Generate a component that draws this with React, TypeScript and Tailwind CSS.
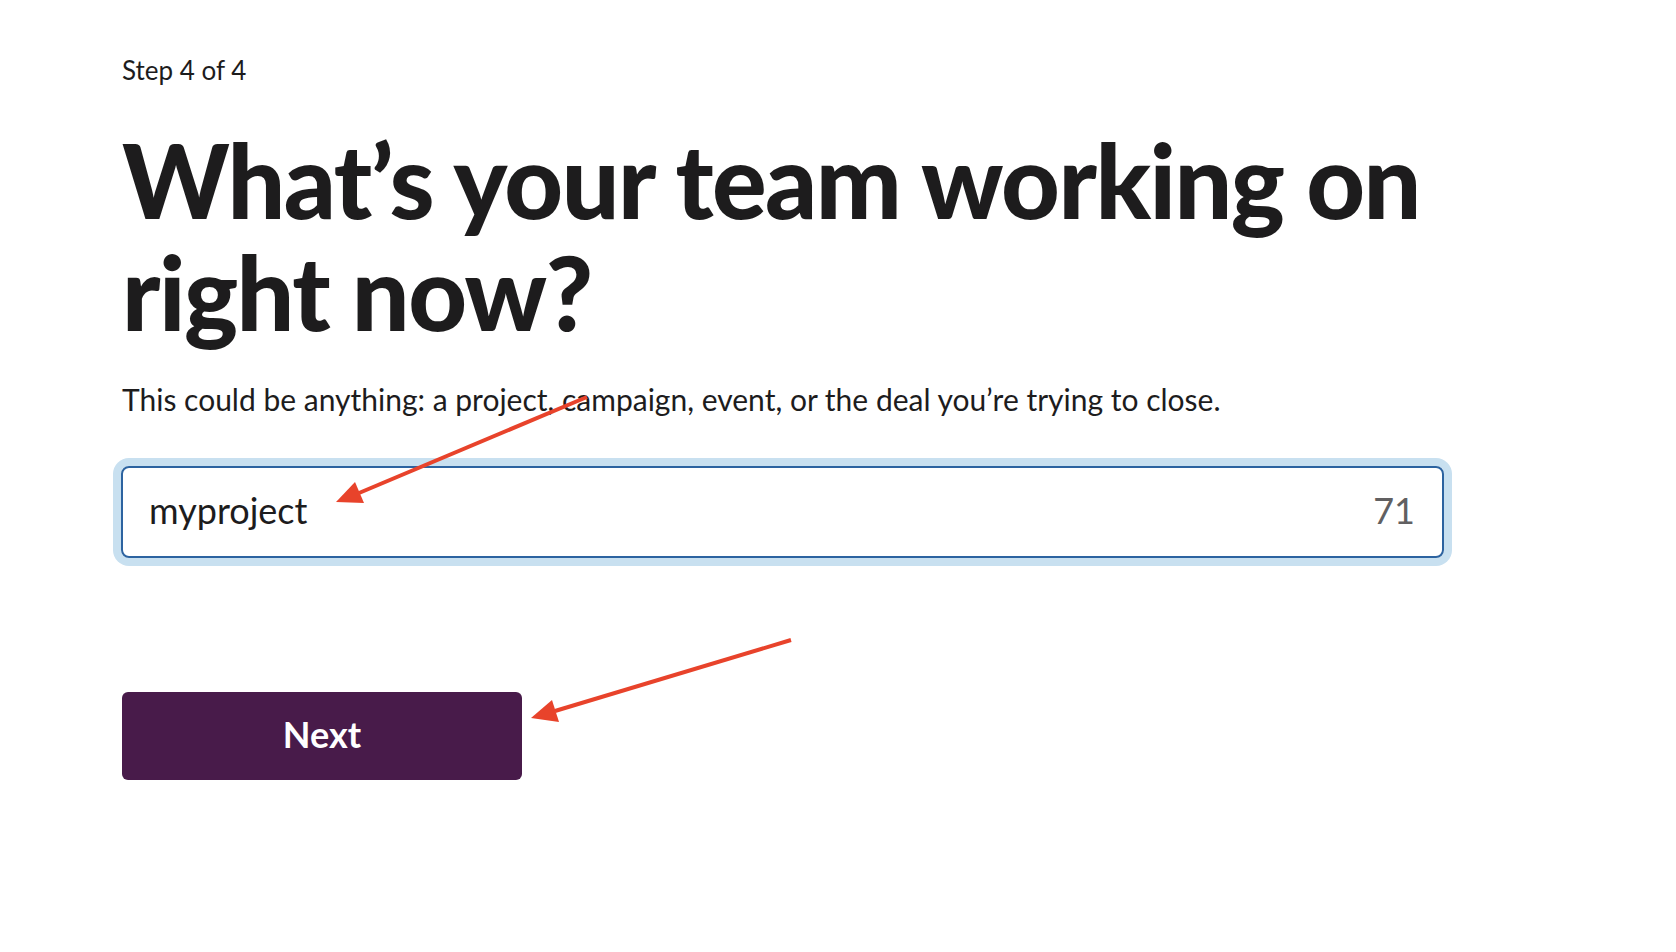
import React from "react";

const Arrow = ({
  from,
  tip,
  left,
  right,
  base,
}: {
  from: [number, number];
  tip: [number, number];
  left: [number, number];
  right: [number, number];
  base: [number, number];
}) => (
  <g>
    <line
      x1={from[0]}
      y1={from[1]}
      x2={base[0]}
      y2={base[1]}
      stroke="#e8432b"
      strokeWidth={4}
      strokeLinecap="butt"
    />
    <polygon
      points={`${tip[0]},${tip[1]} ${left[0]},${left[1]} ${right[0]},${right[1]}`}
      fill="#e8432b"
    />
  </g>
);

const App = () => {
  return (
    <div className="relative w-[1676px] h-[952px] bg-white overflow-hidden font-['Lato','Liberation_Sans',sans-serif] text-[#1d1c1d]">
      <main className="flex flex-col items-start pl-[122px] pt-[54px]">
        <p className="text-[26px] leading-[32px]">Step 4 of 4</p>

        <h1 className="mt-[38px] text-[102px] leading-[112px] font-black tracking-[-0.015em]">
          What’s your team working on
          <br />
          right now?
        </h1>

        <p className="mt-[31px] text-[30px] leading-[40px]">
          This could be anything: a project, campaign, event, or the deal you’re trying to close.
        </p>

        {/* focused text field with char counter */}
        <div className="-ml-px mt-[47px] w-[1323px] h-[92px] flex items-center justify-between pl-[26px] pr-[27px] pb-[5px] border-2 border-[#2c63a0] rounded-[8px] shadow-[0_0_0_8px_#c8e0f0]">
          <span className="text-[36px] leading-[44px]">myproject</span>
          <span className="text-[36px] leading-[44px] text-[#616061]">71</span>
        </div>

        <button className="mt-[134px] w-[400px] h-[88px] rounded-[6px] bg-[#481b4a] text-white text-[36px] leading-[44px] font-bold pb-[4px]">
          Next
        </button>
      </main>

      {/* annotation arrows */}
      <svg
        className="absolute inset-0 w-full h-full pointer-events-none"
        viewBox="0 0 1676 952"
      >
        <Arrow
          from={[587, 397]}
          tip={[336, 502]}
          base={[359, 493]}
          left={[364, 503]}
          right={[355, 482]}
        />
        <Arrow
          from={[791, 640]}
          tip={[531, 718]}
          base={[555, 711]}
          left={[559, 722]}
          right={[552, 700]}
        />
      </svg>
    </div>
  );
};

export default App;
